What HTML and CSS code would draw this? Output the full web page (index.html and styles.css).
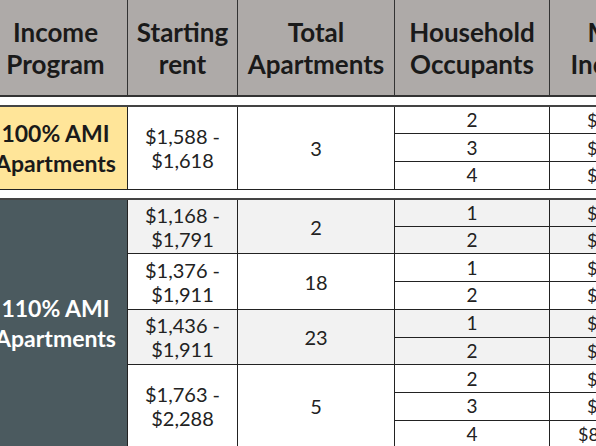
FILE: index.html
```html
<!DOCTYPE html>
<html lang="en">
<head>
    <meta charset="UTF-8">
    <title>Income Programs</title>
    <link rel="stylesheet" href="styles.css">
</head>
<body>

    <div class="sheet">
        <table class="head">
            <colgroup>
                <col class="c1"><col class="c2"><col class="c3"><col class="c4"><col class="c5">
            </colgroup>
            <tr>
                <th>Income<br>Program</th>
                <th>Starting<br>rent</th>
                <th>Total<br>Apartments</th>
                <th>Household<br>Occupants</th>
                <th>Max<br>Income</th>
            </tr>
        </table>

        <table class="group">
            <colgroup>
                <col class="c1"><col class="c2"><col class="c3"><col class="c4"><col class="c5">
            </colgroup>
            <tr>
                <td rowspan="3" class="program program-100">100% AMI<br>Apartments</td>
                <td rowspan="3" class="rent">$1,588 -<br>$1,618</td>
                <td rowspan="3" class="total">3</td>
                <td class="occ">2</td>
                <td class="inc">$96,800</td>
            </tr>
            <tr><td class="occ">3</td><td class="inc">$108,900</td></tr>
            <tr><td class="occ">4</td><td class="inc">$120,900</td></tr>
        </table>

        <table class="group">
            <colgroup>
                <col class="c1"><col class="c2"><col class="c3"><col class="c4"><col class="c5">
            </colgroup>
            <tr class="band">
                <td rowspan="9" class="program program-110">110% AMI<br>Apartments</td>
                <td rowspan="2" class="rent">$1,168 -<br>$1,791</td>
                <td rowspan="2" class="total">2</td>
                <td class="occ">1</td>
                <td class="inc">$93,170</td>
            </tr>
            <tr class="band"><td class="occ">2</td><td class="inc">$106,480</td></tr>
            <tr>
                <td rowspan="2" class="rent">$1,376 -<br>$1,911</td>
                <td rowspan="2" class="total">18</td>
                <td class="occ">1</td>
                <td class="inc">$93,170</td>
            </tr>
            <tr><td class="occ">2</td><td class="inc">$106,480</td></tr>
            <tr class="band">
                <td rowspan="2" class="rent">$1,436 -<br>$1,911</td>
                <td rowspan="2" class="total">23</td>
                <td class="occ">1</td>
                <td class="inc">$93,170</td>
            </tr>
            <tr class="band"><td class="occ">2</td><td class="inc">$106,480</td></tr>
            <tr>
                <td rowspan="3" class="rent">$1,763 -<br>$2,288</td>
                <td rowspan="3" class="total">5</td>
                <td class="occ">2</td>
                <td class="inc">$106,480</td>
            </tr>
            <tr><td class="occ">3</td><td class="inc">$119,790</td></tr>
            <tr><td class="occ">4</td><td class="inc inc-last">$82,990</td></tr>
        </table>
    </div>

</body>
</html>
```

FILE: styles.css
```css
body {
    margin: 0;
    background-color: white;
    overflow: hidden;
    font-family: Lato, "Open Sans", sans-serif;
    color: #222;
}

.sheet {
    margin-left: -17px;
    width: 720px;
}

table {
    border-collapse: collapse;
    table-layout: fixed;
    width: 693px;
}

.c1 { width: 144px; }
.c2 { width: 110px; }
.c3 { width: 157px; }
.c4 { width: 155px; }
.c5 { width: 127px; }

.head th {
    background-color: #aeaaa8;
    height: 95px;
    padding: 0;
    font-size: 26px;
    line-height: 32px;
    font-weight: bold;
    color: #1a1a1a;
    border-left: 1px solid #333;
    border-right: 1px solid #333;
    border-bottom: 2px solid #333;
}

.group {
    margin-top: 8px;
    border-top: 2px solid #444;
}

.group td {
    border: 1px solid #222;
    padding: 0;
    text-align: center;
}

.group tr {
    height: 27.7px;
}

.band td {
    background-color: #f2f2f2;
}

.program {
    font-size: 23px;
    line-height: 30px;
    font-weight: bold;
}

.program-100 {
    background-color: #ffe599;
    color: #1a1a1a;
}

.band .program-110,
.program-110 {
    background-color: #4b5a5f;
    color: white;
}

.rent {
    font-size: 20px;
    line-height: 24px;
}

.total {
    font-size: 20px;
}

.occ {
    font-size: 19px;
    line-height: 26px;
}

.group .inc {
    font-size: 18px;
    line-height: 26px;
    text-align: left;
    padding-left: 37px;
}

.group .inc-last {
    padding-left: 28px;
}
```
